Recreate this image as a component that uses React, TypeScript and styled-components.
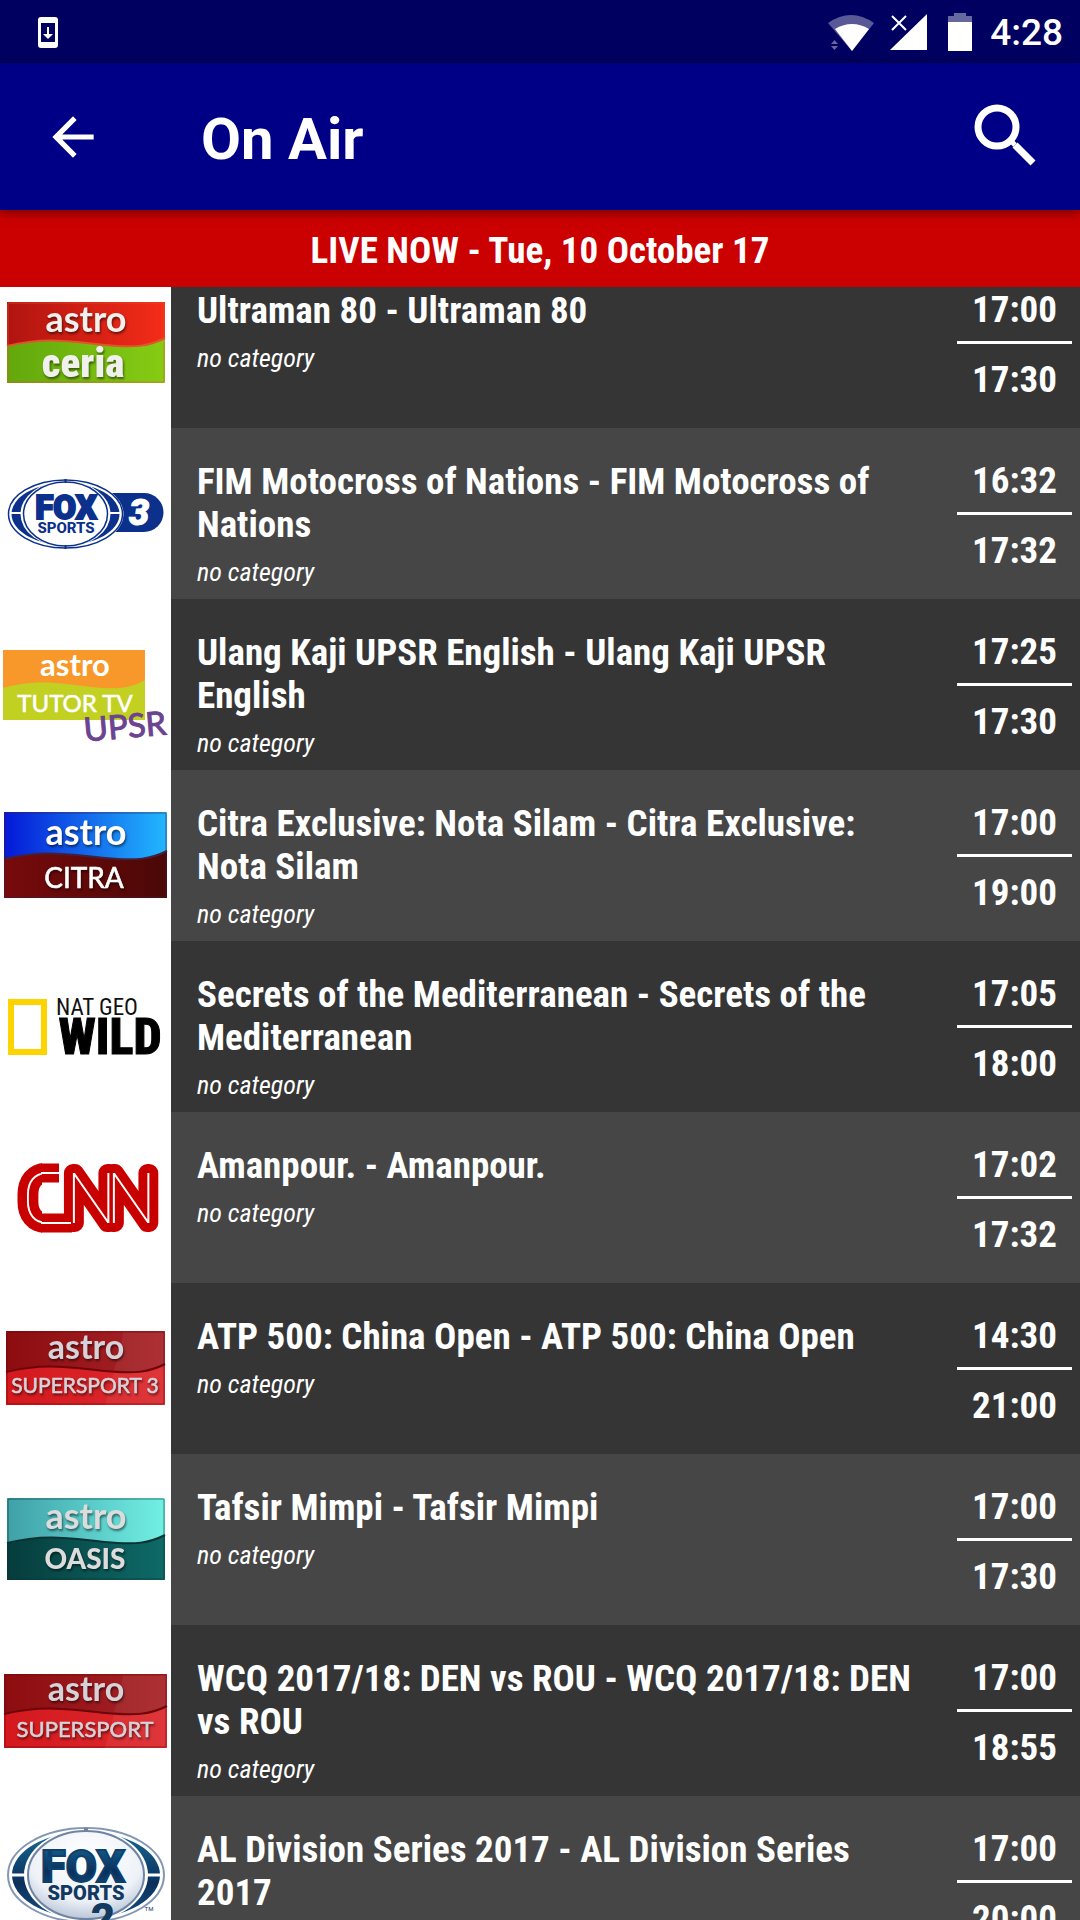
import React from "react";
import styled, { createGlobalStyle } from "styled-components";

const condensed = `"Roboto Condensed", Roboto, "Liberation Sans Narrow", sans-serif`;

const GlobalStyle = createGlobalStyle`
  * { box-sizing: border-box; }
  body { margin: 0; background: #353535; }
`;

const Screen = styled.div`
  display: flex;
  flex-direction: column;
  height: 100vh;
  overflow: hidden;
  color: #fff;
  font-family: ${condensed};
`;

const StatusBar = styled.div`
  display: flex;
  align-items: center;
  justify-content: space-between;
  height: 63px;
  flex: none;
  padding: 2px 17px 0 37px;
  background: #000061;
`;

const StatusGroup = styled.div`
  display: flex;
  align-items: center;
`;

const Clock = styled.time`
  margin-left: 16px;
  font: 500 37px/40px Roboto, sans-serif;
`;

const AppBar = styled.header`
  display: flex;
  align-items: center;
  flex: none;
  height: 147px;
  padding: 0 42px;
  background: #000087;
  box-shadow: 0 2px 10px rgba(0, 0, 0, 0.5);
  z-index: 1;
`;

const IconButton = styled.button`
  display: flex;
  padding: 0;
  border: 0;
  background: none;
  color: inherit;
`;

const PageTitle = styled.h1`
  flex: 1;
  margin: 0 0 0 97px;
  padding-top: 4px;
  font-family: Roboto, sans-serif;
  font-size: 58px;
  line-height: 72px;
  font-weight: 700;
`;

const Banner = styled.h2`
  flex: none;
  margin: 0;
  padding: 18px 16px 14px;
  background: #cb0000;
  font-size: 37px;
  line-height: 45px;
  font-weight: 700;
  text-align: center;
`;

const Viewport = styled.main`
  flex: 1;
  min-height: 0;
  overflow: hidden;
`;

const ProgrammeList = styled.ul`
  margin: -30px 0 0;
  padding: 0;
  list-style: none;
`;

const Row = styled.li`
  display: grid;
  grid-template-columns: 171px 1fr 115px;
  min-height: 171px;
  padding-right: 8px;
  background: #353535;
  &:nth-child(even) { background: #464646; }
`;

const ChannelCell = styled.div`
  display: flex;
  align-items: center;
  background: #fff;
`;

const Details = styled.div`
  padding: 32px 33px 0 26px;
`;

const Title = styled.h3`
  margin: 0;
  font-size: 37px;
  line-height: 43px;
  font-weight: 700;
`;

const Category = styled.p`
  margin: 10px 0 0;
  font-size: 26px;
  line-height: 32px;
  font-style: italic;
`;

const Times = styled.div`
  display: flex;
  flex-direction: column;
  padding-top: 31px;
  text-align: center;
  font-size: 37px;
  line-height: 43px;
  font-weight: 700;
`;

const Start = styled.time`
  padding-bottom: 10px;
  border-bottom: 3px solid #fff;
`;

const End = styled.time`
  padding-top: 14px;
`;

const Logo = styled.svg`
  display: block;
  width: 171px;
  height: 171px;
  overflow: hidden;
  text { text-anchor: middle; }
`;

const PlateInk = styled.g<{ $raised: boolean }>`
  filter: ${(p) => (p.$raised ? "drop-shadow(1px 2px 1px rgba(0, 0, 0, 0.5))" : "none")};
`;

type PlateProps = {
  id: string;
  box: [number, number, number, number];
  top: [string, string];
  bottom: [string, string];
  edge: string;
  label: string;
  labelSize: number;
  labelY: number;
  labelX?: number;
  labelWeight?: number;
  labelFont?: string;
  astroX?: number;
  astroY?: number;
  astroSize?: number;
  ink?: string;
  flat?: boolean;
  shine?: boolean;
  children?: React.ReactNode;
};

function AstroPlate(p: PlateProps) {
  const [x1, y1, x2, y2] = p.box;
  const w = x2 - x1;
  const wave = `C${x1 + w * 0.25} 79 ${x1 + w * 0.42} 85 ${x1 + w * 0.62} 88 S${x1 + w * 0.9} 89 ${x2} 81`;
  const ink = p.ink ?? "#fff";
  const font = p.labelFont ?? "Lato, sans-serif";
  return (
    <Logo viewBox="0 0 171 171" role="img" aria-label={`astro ${p.label}`}>
      <defs>
        <linearGradient id={`${p.id}t`}>
          <stop offset="0" stopColor={p.top[0]} />
          <stop offset="1" stopColor={p.top[1]} />
        </linearGradient>
        <linearGradient id={`${p.id}b`}>
          <stop offset="0" stopColor={p.bottom[0]} />
          <stop offset="1" stopColor={p.bottom[1]} />
        </linearGradient>
      </defs>
      <rect x={x1} y={y1} width={w} height={y2 - y1} fill={`url(#${p.id}t)`} />
      <path d={`M${x1} 89${wave}V${y2}H${x1}z`} fill={`url(#${p.id}b)`} />
      {p.shine && (
        <>
          <path d={`M123 ${y1 + 1}Q121 68 114 87Q145 91 ${x2} 81V${y1 + 1}z`} fill="#fff" opacity="0.06" />
          <path d={`M114 89L105 ${y2}H${x2}V83Q145 93 114 89z`} fill="#fff" opacity="0.06" />
        </>
      )}
      {!p.flat && (
        <>
          <path d={`M${x1} 89${wave}`} fill="none" stroke={p.edge} strokeWidth="2" />
          <rect x={x1 + 1} y={y1 + 1} width={w - 2} height={y2 - y1 - 2} rx="1" fill="none" stroke={p.edge} strokeWidth="1" opacity="0.6" />
        </>
      )}
      <PlateInk fill={ink} $raised={!p.flat}>
        <text x={p.astroX ?? 86} y={p.astroY ?? 75} fontFamily="Lato, sans-serif" fontWeight="700" fontSize={p.astroSize ?? 36}>astro</text>
        <text x={p.labelX ?? 85} y={p.labelY} fontFamily={font} fontWeight={p.labelWeight ?? 700} fontSize={p.labelSize} stroke={ink} strokeWidth={p.labelWeight === 400 ? 0.6 : 0}>{p.label}</text>
      </PlateInk>
      {p.children}
    </Logo>
  );
}

const CeriaLogo = () => (
  <AstroPlate id="ceria" box={[7, 45, 165, 126]} top={["#b01410", "#f52c18"]} bottom={["#62a80c", "#86cc14"]}
    edge="#e0552a" label="ceria" labelSize={41} labelY={120} labelX={83} labelWeight={900} labelFont={condensed} ink="#f0f0ec" />
);

const TutorLogo = () => (
  <AstroPlate id="tutor" box={[3, 51, 145, 121]} top={["#f8982a", "#f8982a"]} bottom={["#c2d022", "#c2d022"]}
    edge="none" label="TUTOR TV" labelSize={24} labelY={113} labelX={75} labelWeight={400} astroX={75} astroY={77} astroSize={31} flat>
    <text x="126" y="139" transform="rotate(-5 126 139)" fontFamily="Lato, sans-serif" fontSize="33" fill="#6b4390" stroke="#6b4390" strokeWidth="1">UPSR</text>
  </AstroPlate>
);

const CitraLogo = () => (
  <AstroPlate id="citra" box={[4, 42, 167, 128]} top={["#0418d8", "#22b8ff"]} bottom={["#780a0c", "#4a0806"]}
    edge="#45203c" label="CITRA" labelSize={28} labelY={118} labelX={84} labelWeight={400} astroY={75} astroSize={36} />
);

const OasisLogo = () => (
  <AstroPlate id="oasis" box={[7, 44, 165, 126]} top={["#3fa0a8", "#72f0e4"]} bottom={["#063c3c", "#0e6a68"]}
    edge="#0a3434" label="OASIS" labelSize={28} labelY={115} labelWeight={900} ink="#dcdcdc" />
);

const SuperSportLogo = () => (
  <AstroPlate id="ss" box={[4, 49, 167, 123]} top={["#8c0c10", "#a82428"]} bottom={["#d4181e", "#dc2a2e"]}
    edge="#6c060a" label="SUPERSPORT" labelSize={22} labelY={112} astroY={76} astroSize={34} labelWeight={400} ink="#d6d3d8" shine />
);

const SuperSport3Logo = () => (
  <AstroPlate id="ss3" box={[6, 48, 165, 122]} top={["#8c0c10", "#a82428"]} bottom={["#d4181e", "#dc2a2e"]}
    edge="#6c060a" label="SUPERSPORT 3" labelSize={21} labelY={110} astroY={76} astroSize={34} labelWeight={400} ink="#d6d3d8" shine />
);

const FoxSports3Logo = () => (
  <Logo viewBox="0 0 171 171" role="img" aria-label="FOX Sports 3">
    <path d="M108 65H144A19 19 0 0 1 144 104H108z" fill="#0b318c" />
    <ellipse cx="65.500" cy="86" rx="58" ry="35" fill="#fff" />
    <ellipse cx="65.500" cy="86" rx="57" ry="34" fill="#fff" stroke="#0b318c" strokeWidth="1.500" />
    <ellipse cx="65.500" cy="86" rx="54" ry="31" fill="#0b318c" />
    <ellipse cx="65.500" cy="86" rx="45" ry="33" fill="#fff" />
    <ellipse cx="65.500" cy="86" rx="42" ry="32" fill="none" stroke="#0b318c" strokeWidth="1.500" />
    <path d="M11 85H22M109 85H120" stroke="#fff" strokeWidth="2" />
    <path d="M65.500 51V55M65.500 117V121" stroke="#0b318c" strokeWidth="2" />
    <text x="66" y="91" fontFamily="Roboto, sans-serif" fontWeight="900" fontSize="33" fill="#0b318c" stroke="#0b318c" strokeWidth="2">FOX</text>
    <text x="66" y="105" fontFamily="Roboto, sans-serif" fontWeight="800" fontSize="15" fill="#0b318c">SPORTS</text>
    <text x="139" y="97" fontFamily="Roboto, sans-serif" fontWeight="900" fontStyle="italic" fontSize="36" fill="#fff" stroke="#fff" strokeWidth="1">3</text>
  </Logo>
);

const FoxSports2Logo = () => (
  <Logo viewBox="0 0 171 171" role="img" aria-label="FOX Sports 2">
    <defs>
      <linearGradient id="foxInk" x1="0" y1="0" x2="0" y2="1">
        <stop offset="0" stopColor="#176a96" />
        <stop offset="0.6" stopColor="#0a2f5c" />
        <stop offset="1" stopColor="#17517f" />
      </linearGradient>
      <radialGradient id="foxGlass" cx="0.5" cy="0.3" r="0.7">
        <stop offset="0" stopColor="#fff" />
        <stop offset="0.7" stopColor="#eef2f8" />
        <stop offset="1" stopColor="#b9c6d8" />
      </radialGradient>
    </defs>
    <ellipse cx="86" cy="79" rx="78" ry="47" fill="#fff" stroke="#8497b2" strokeWidth="2" />
    <ellipse cx="86" cy="79" rx="74" ry="43" fill="url(#foxInk)" />
    <ellipse cx="86" cy="79" rx="62" ry="46" fill="#fff" />
    <ellipse cx="86" cy="79" rx="58" ry="44" fill="url(#foxGlass)" stroke="#6e84a4" strokeWidth="2" />
    <path d="M11 79H26M146 79H161" stroke="#fff" strokeWidth="3" />
    <path d="M86 32V36" stroke="#6e84a4" strokeWidth="4" />
    <text x="83" y="86" fontFamily="Roboto, sans-serif" fontWeight="900" fontSize="45" fill="url(#foxInk)" stroke="#0d416d" strokeWidth="2">FOX</text>
    <text x="86" y="104" fontFamily="Roboto, sans-serif" fontWeight="900" fontSize="20" fill="#12395f">SPORTS</text>
    <text x="103" y="137" fontFamily="Roboto, sans-serif" fontWeight="900" fontSize="42" fill="#12395f">2</text>
    <text x="149" y="115" fontFamily="Roboto, sans-serif" fontSize="6" fill="#12395f">TM</text>
  </Logo>
);

const NatGeoLogo = () => (
  <Logo viewBox="0 0 171 171" role="img" aria-label="Nat Geo Wild">
    <rect x="11" y="61" width="33" height="50" fill="none" stroke="#fdd400" strokeWidth="6" />
    <text x="97" y="74" fontFamily={condensed} fontSize="23" fill="#111">NAT GEO</text>
    <text x="110" y="113" fontFamily={condensed} fontWeight="800" fontSize="50" fill="#000" stroke="#000" strokeWidth="1">WILD</text>
  </Logo>
);

const CnnLogo = () => (
  <Logo viewBox="0 0 171 171" role="img" aria-label="CNN">
    <defs>
      <clipPath id="bowl"><rect x="0" y="40" width="42" height="90" /></clipPath>
    </defs>
    <g fontFamily="Roboto, sans-serif" fontWeight="100" fontSize="71" strokeLinejoin="round">
      <text x="45" y="111" clipPath="url(#bowl)" fill="#c90000" stroke="#c90000" strokeWidth="19">C</text>
      <path d="M41 61H59M41 111H72" stroke="#c90000" strokeWidth="19" />
      <text x="91 131" y="111" fill="#c90000" stroke="#c90000" strokeWidth="18">NN</text>
      <text x="45" y="111" clipPath="url(#bowl)" fill="#fff">C</text>
      <path d="M41 61H59M41 111H71" stroke="#fff" strokeWidth="2" />
      <text x="91 131" y="111" fill="#fff">NN</text>
    </g>
  </Logo>
);

type Programme = { channel: React.FC; title: string; start: string; end: string };

const programmes: Programme[] = [
  { channel: CeriaLogo, title: "Ultraman 80 - Ultraman 80", start: "17:00", end: "17:30" },
  { channel: FoxSports3Logo, title: "FIM Motocross of Nations - FIM Motocross of Nations", start: "16:32", end: "17:32" },
  { channel: TutorLogo, title: "Ulang Kaji UPSR English - Ulang Kaji UPSR English", start: "17:25", end: "17:30" },
  { channel: CitraLogo, title: "Citra Exclusive: Nota Silam - Citra Exclusive: Nota Silam", start: "17:00", end: "19:00" },
  { channel: NatGeoLogo, title: "Secrets of the Mediterranean - Secrets of the Mediterranean", start: "17:05", end: "18:00" },
  { channel: CnnLogo, title: "Amanpour. - Amanpour.", start: "17:02", end: "17:32" },
  { channel: SuperSport3Logo, title: "ATP 500: China Open - ATP 500: China Open", start: "14:30", end: "21:00" },
  { channel: OasisLogo, title: "Tafsir Mimpi - Tafsir Mimpi", start: "17:00", end: "17:30" },
  { channel: SuperSportLogo, title: "WCQ 2017/18: DEN vs ROU - WCQ 2017/18: DEN vs ROU", start: "17:00", end: "18:55" },
  { channel: FoxSports2Logo, title: "AL Division Series 2017 - AL Division Series 2017", start: "17:00", end: "20:00" },
];

export default function App() {
  return (
    <Screen>
      <GlobalStyle />
      <StatusBar>
        <svg width="22" height="32" viewBox="0 0 22 32" aria-hidden="true">
          <path fillRule="evenodd" fill="#fff" d="M4 0H18Q21 0 21 3V28Q21 31 18 31H4Q1 31 1 28V3Q1 0 4 0zM4 6V25H18V6zM10 10H12V17H16L11 22L6 17H10z" />
        </svg>
        <StatusGroup>
          <svg width="146" height="40" viewBox="828 12 146 40" aria-hidden="true">
            <path d="M828 22Q851 6 874 22L852 50z" fill="#fff" opacity="0.35" />
            <path d="M835 28Q852 18 869 28L852 50z" fill="#fff" />
            <path d="M831 43L834.500 39L838 43zM831 45H838L834.500 49z" fill="#fff" opacity="0.4" />
            <path d="M890 49L927 13V49z" fill="#fff" />
            <path d="M890 14H908V28L905 31H890z" fill="#000061" />
            <path d="M892 15L906 29M906 15L892 29" stroke="#fff" strokeWidth="2" />
            <path d="M954 12H966V15H972V21H948V15H954z" fill="#fff" opacity="0.4" />
            <rect x="948" y="21" width="24" height="29" fill="#fff" />
          </svg>
          <Clock>4:28</Clock>
        </StatusGroup>
      </StatusBar>
      <AppBar>
        <IconButton aria-label="Back">
          <svg width="62" height="62" viewBox="0 0 24 24" fill="currentColor">
            <path d="M20 11H7.830l5.590-5.590L12 4l-8 8 8 8 1.410-1.410L7.830 13H20v-2z" />
          </svg>
        </IconButton>
        <PageTitle>On Air</PageTitle>
        <IconButton aria-label="Search">
          <svg width="64" height="66" viewBox="974 104 64 66" fill="none" stroke="currentColor">
            <circle cx="997" cy="127" r="19" strokeWidth="7" />
            <path d="M1012 142L1015 145" strokeWidth="5" />
            <path d="M1015 145L1033 163" strokeWidth="7" />
          </svg>
        </IconButton>
      </AppBar>
      <Banner>LIVE NOW - Tue, 10 October 17</Banner>
      <Viewport>
        <ProgrammeList>
          {programmes.map(({ channel: Channel, title, start, end }) => (
            <Row key={title}>
              <ChannelCell><Channel /></ChannelCell>
              <Details>
                <Title>{title}</Title>
                <Category>no category</Category>
              </Details>
              <Times>
                <Start>{start}</Start>
                <End>{end}</End>
              </Times>
            </Row>
          ))}
        </ProgrammeList>
      </Viewport>
    </Screen>
  );
}
